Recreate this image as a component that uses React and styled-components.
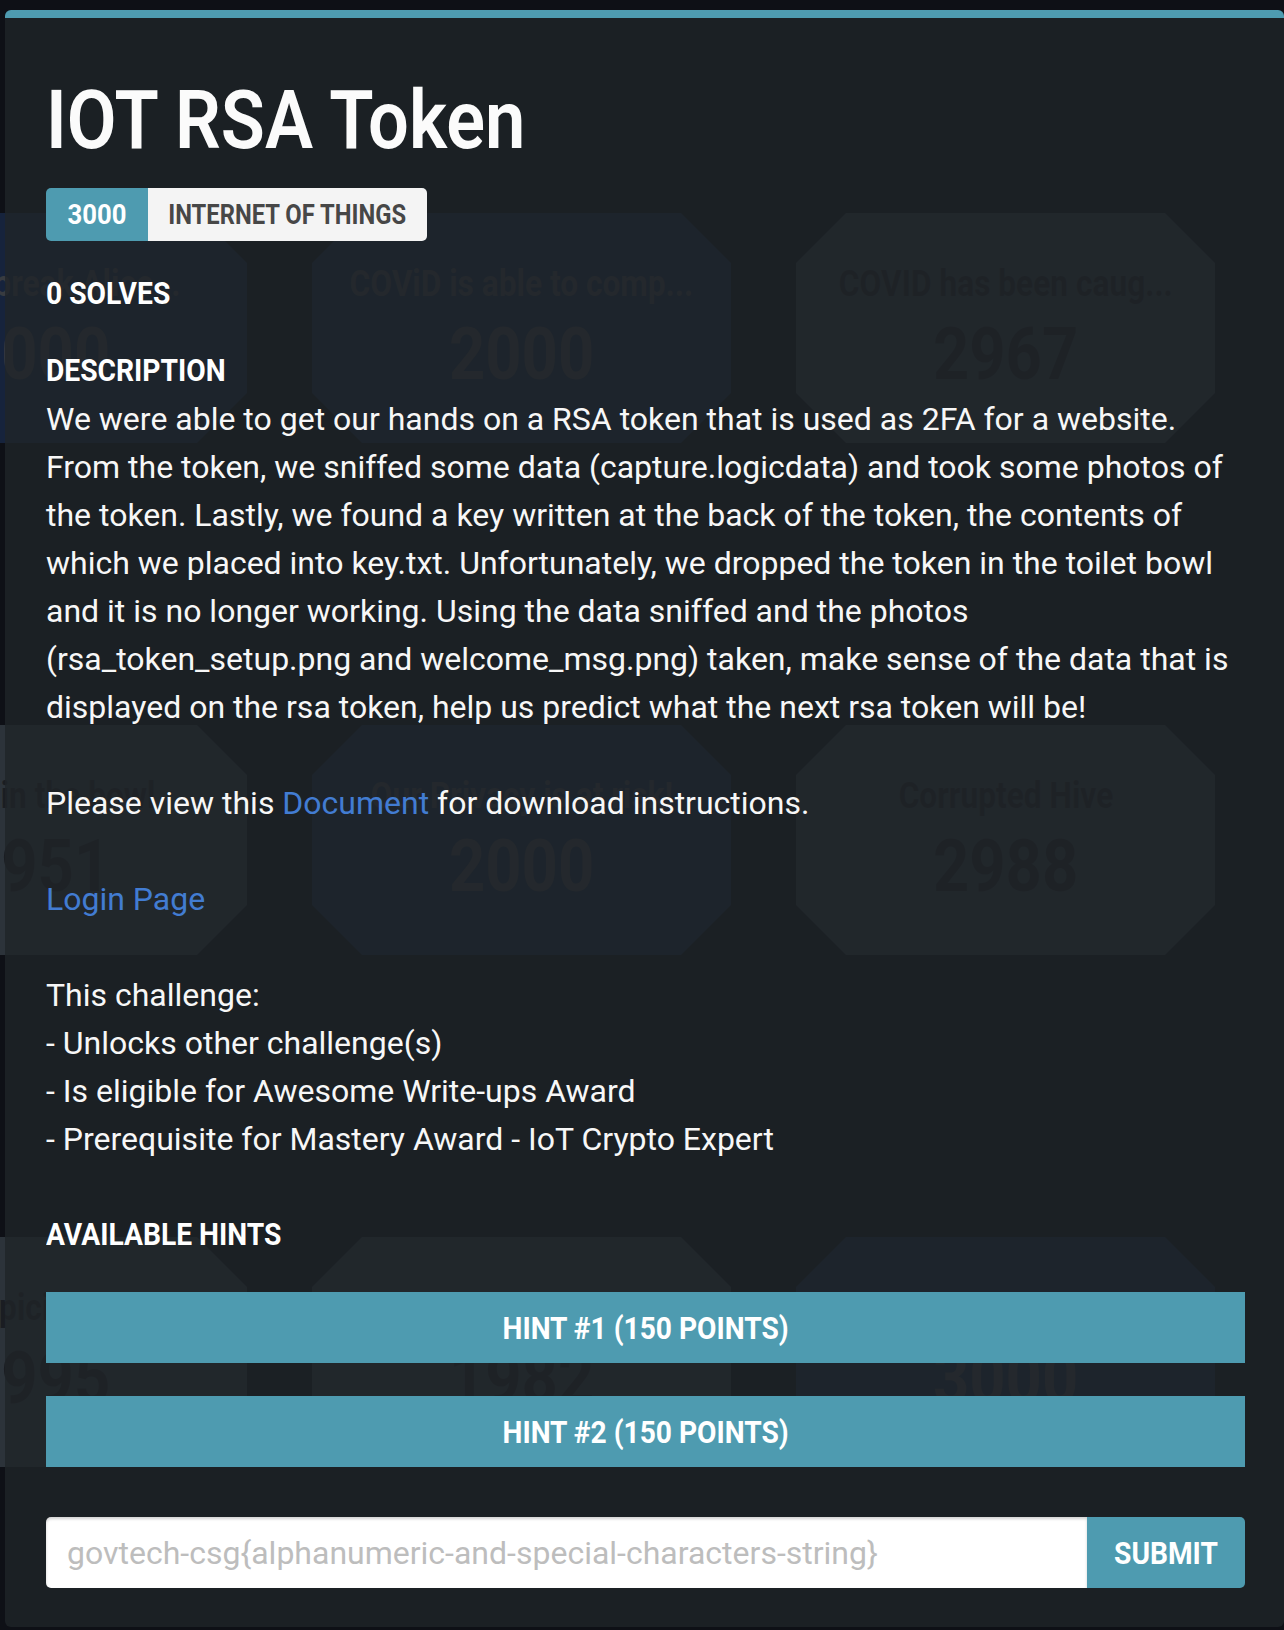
import React from 'react'
import styled, { createGlobalStyle, css } from 'styled-components'

const teal = '#4e9bb0'
const body = `"Roboto", "Noto Sans", sans-serif`

// no condensed display face offline: squeeze bold Roboto instead
const condensed = css`
  font-family: "Roboto", "Liberation Sans", sans-serif;
  font-weight: 700;
  white-space: nowrap;
`

const GlobalStyle = createGlobalStyle`
  body {
    margin: 0;
    background: #0e1016;
  }
`

const Page = styled.div`
  position: relative;
  width: 1284px;
  height: 1630px;
  overflow: hidden;
  background: #0e1016;
`

const Squeeze = styled.span`
  display: inline-block;
  transform: scaleX(${({ $x }) => $x || 0.88});
  transform-origin: ${({ $origin }) => $origin || 'center'};
`

// challenge board behind the modal
const Board = styled.div`
  display: grid;
  grid-template-columns: repeat(3, 419px);
  column-gap: 65px;
  row-gap: 282px;
  padding-top: 213px;
  margin-left: -172px;
`

const Card = styled.div`
  height: 230px;
  display: flex;
  flex-direction: column;
  align-items: center;
  padding-top: 51px;
  box-sizing: border-box;
  background: ${({ $solved }) => ($solved ? '#16233c' : '#2c333a')};
  clip-path: polygon(50px 0, calc(100% - 50px) 0, 100% 50px, 100% calc(100% - 50px), calc(100% - 50px) 100%, 50px 100%, 0 calc(100% - 50px), 0 50px);
  ${condensed};
  color: ${({ $solved }) => ($solved ? '#383b40' : '#1a1d22')};
`

const CardTitle = styled.div`
  font-size: 36px;
  line-height: 40px;
`

const CardPoints = styled.div`
  margin-top: 13px;
  font-size: 72px;
  line-height: 76px;
`

const Modal = styled.div`
  position: absolute;
  top: 10px;
  left: 5px;
  width: 1279px;
  height: 1617px;
  box-sizing: border-box;
  padding: 0 39px 0 41px;
  background: rgba(31, 36, 40, 0.8);
  border-top: 8px solid ${teal};
  border-radius: 6px;
  color: #fafafa;
`

const Title = styled.h1`
  margin: 54px 0 0;
  ${condensed};
  font-weight: 600;
  font-size: 82px;
  line-height: 96px;
  color: #fbfbfb;
  transform: scaleX(0.88);
  transform-origin: left;
`

const Badge = styled.div`
  display: inline-flex;
  height: 53px;
  margin-top: 20px;
  border-radius: 5px;
  overflow: hidden;
  ${condensed};
  font-size: 27px;
`

const BadgePart = styled.span`
  display: flex;
  align-items: center;
  justify-content: center;
  width: ${({ $w }) => $w}px;
  background: ${({ $light }) => ($light ? '#f4f4f4' : teal)};
  color: ${({ $light }) => ($light ? '#474747' : '#ffffff')};
`

const Label = styled.div`
  margin-top: ${({ $top }) => $top}px;
  ${condensed};
  font-size: 31px;
  line-height: 48px;
  text-transform: uppercase;
  color: #ffffff;
  transform: scaleX(0.91);
  transform-origin: left;
`

const Text = styled.p`
  margin: ${({ $top }) => $top || 0}px 0 0;
  font-family: ${body};
  font-size: 32px;
  line-height: 48px;
  color: #f7f7f7;
`

const Link = styled.a`
  color: #427cd2;
  text-decoration: none;
`

const HintButton = styled.button`
  display: block;
  width: 100%;
  height: 71px;
  margin-top: 33px;
  padding: 0;
  border: none;
  background: ${teal};
  color: #ffffff;
  ${condensed};
  font-size: 32px;
  cursor: pointer;
`

const FlagRow = styled.form`
  display: flex;
  height: 71px;
  margin-top: 50px;
`

const FlagInput = styled.input`
  flex: 1;
  min-width: 0;
  border: none;
  outline: none;
  border-radius: 5px 0 0 5px;
  box-shadow: inset 0 2px 3px rgba(0, 0, 0, 0.18);
  background: #ffffff;
  padding: 0 0 0 21px;
  font-family: ${body};
  font-size: 32px;
  color: #333;
  &::placeholder {
    color: #bdbdbd;
  }
`

const SubmitButton = styled.button`
  width: 158px;
  padding: 0;
  border: none;
  border-radius: 0 5px 5px 0;
  background: ${teal};
  color: #ffffff;
  ${condensed};
  font-size: 32px;
  cursor: pointer;
`

const cards = [
  { title: 'COViD break Alice...', points: 3000, solved: true },
  { title: 'COViD is able to comp...', points: 2000, solved: true },
  { title: 'COVID has been caug...', points: 2967 },
  { title: 'Hack in the bowl', points: 2951 },
  { title: 'Our Privacy is at risk!', points: 2000, solved: true },
  { title: 'Corrupted Hive', points: 2988 },
  { title: 'Suspicious...', points: 2995 },
  { title: '', points: 1982 },
  { title: '', points: 3000, solved: true },
]

export default function App() {
  return (
    <Page>
      <GlobalStyle />
      <Board>
        {cards.map((c, i) => (
          <Card key={i} $solved={c.solved}>
            <CardTitle><Squeeze>{c.title || '\u00a0'}</Squeeze></CardTitle>
            <CardPoints><Squeeze>{c.points}</Squeeze></CardPoints>
          </Card>
        ))}
      </Board>

      <Modal>
        <Title>IOT RSA Token</Title>
        <Badge>
          <BadgePart $w={102}><Squeeze $x={0.95}>3000</Squeeze></BadgePart>
          <BadgePart $w={279} $light><Squeeze>INTERNET OF THINGS</Squeeze></BadgePart>
        </Badge>

        <Label $top={29}>0 Solves</Label>
        <Label $top={29}>Description</Label>
        <Text>
          We were able to get our hands on a RSA token that is used as 2FA for a website. From the
          token, we sniffed some data (capture.logicdata) and took some photos of the token. Lastly, we
          found a key written at the back of the token, the contents of which we placed into key.txt.
          Unfortunately, we dropped the token in the toilet bowl and it is no longer working. Using the
          data sniffed and the photos (rsa_token_setup.png and welcome_msg.png) taken, make sense of the
          data that is displayed on the rsa token, help us predict what the next rsa token will be!
        </Text>
        <Text $top={48}>
          Please view this <Link href="#">Document</Link> for download instructions.
        </Text>
        <Text $top={48}>
          <Link href="#">Login Page</Link>
        </Text>
        <Text $top={48}>
          This challenge:<br />
          - Unlocks other challenge(s)<br />
          - Is eligible for Awesome Write-ups Award<br />
          - Prerequisite for Mastery Award - IoT Crypto Expert
        </Text>

        <Label $top={48}>Available Hints</Label>
        <HintButton><Squeeze>HINT #1 (150 POINTS)</Squeeze></HintButton>
        <HintButton><Squeeze>HINT #2 (150 POINTS)</Squeeze></HintButton>

        <FlagRow onSubmit={(e) => e.preventDefault()}>
          <FlagInput placeholder="govtech-csg{alphanumeric-and-special-characters-string}" />
          <SubmitButton type="submit"><Squeeze>SUBMIT</Squeeze></SubmitButton>
        </FlagRow>
      </Modal>
    </Page>
  )
}
